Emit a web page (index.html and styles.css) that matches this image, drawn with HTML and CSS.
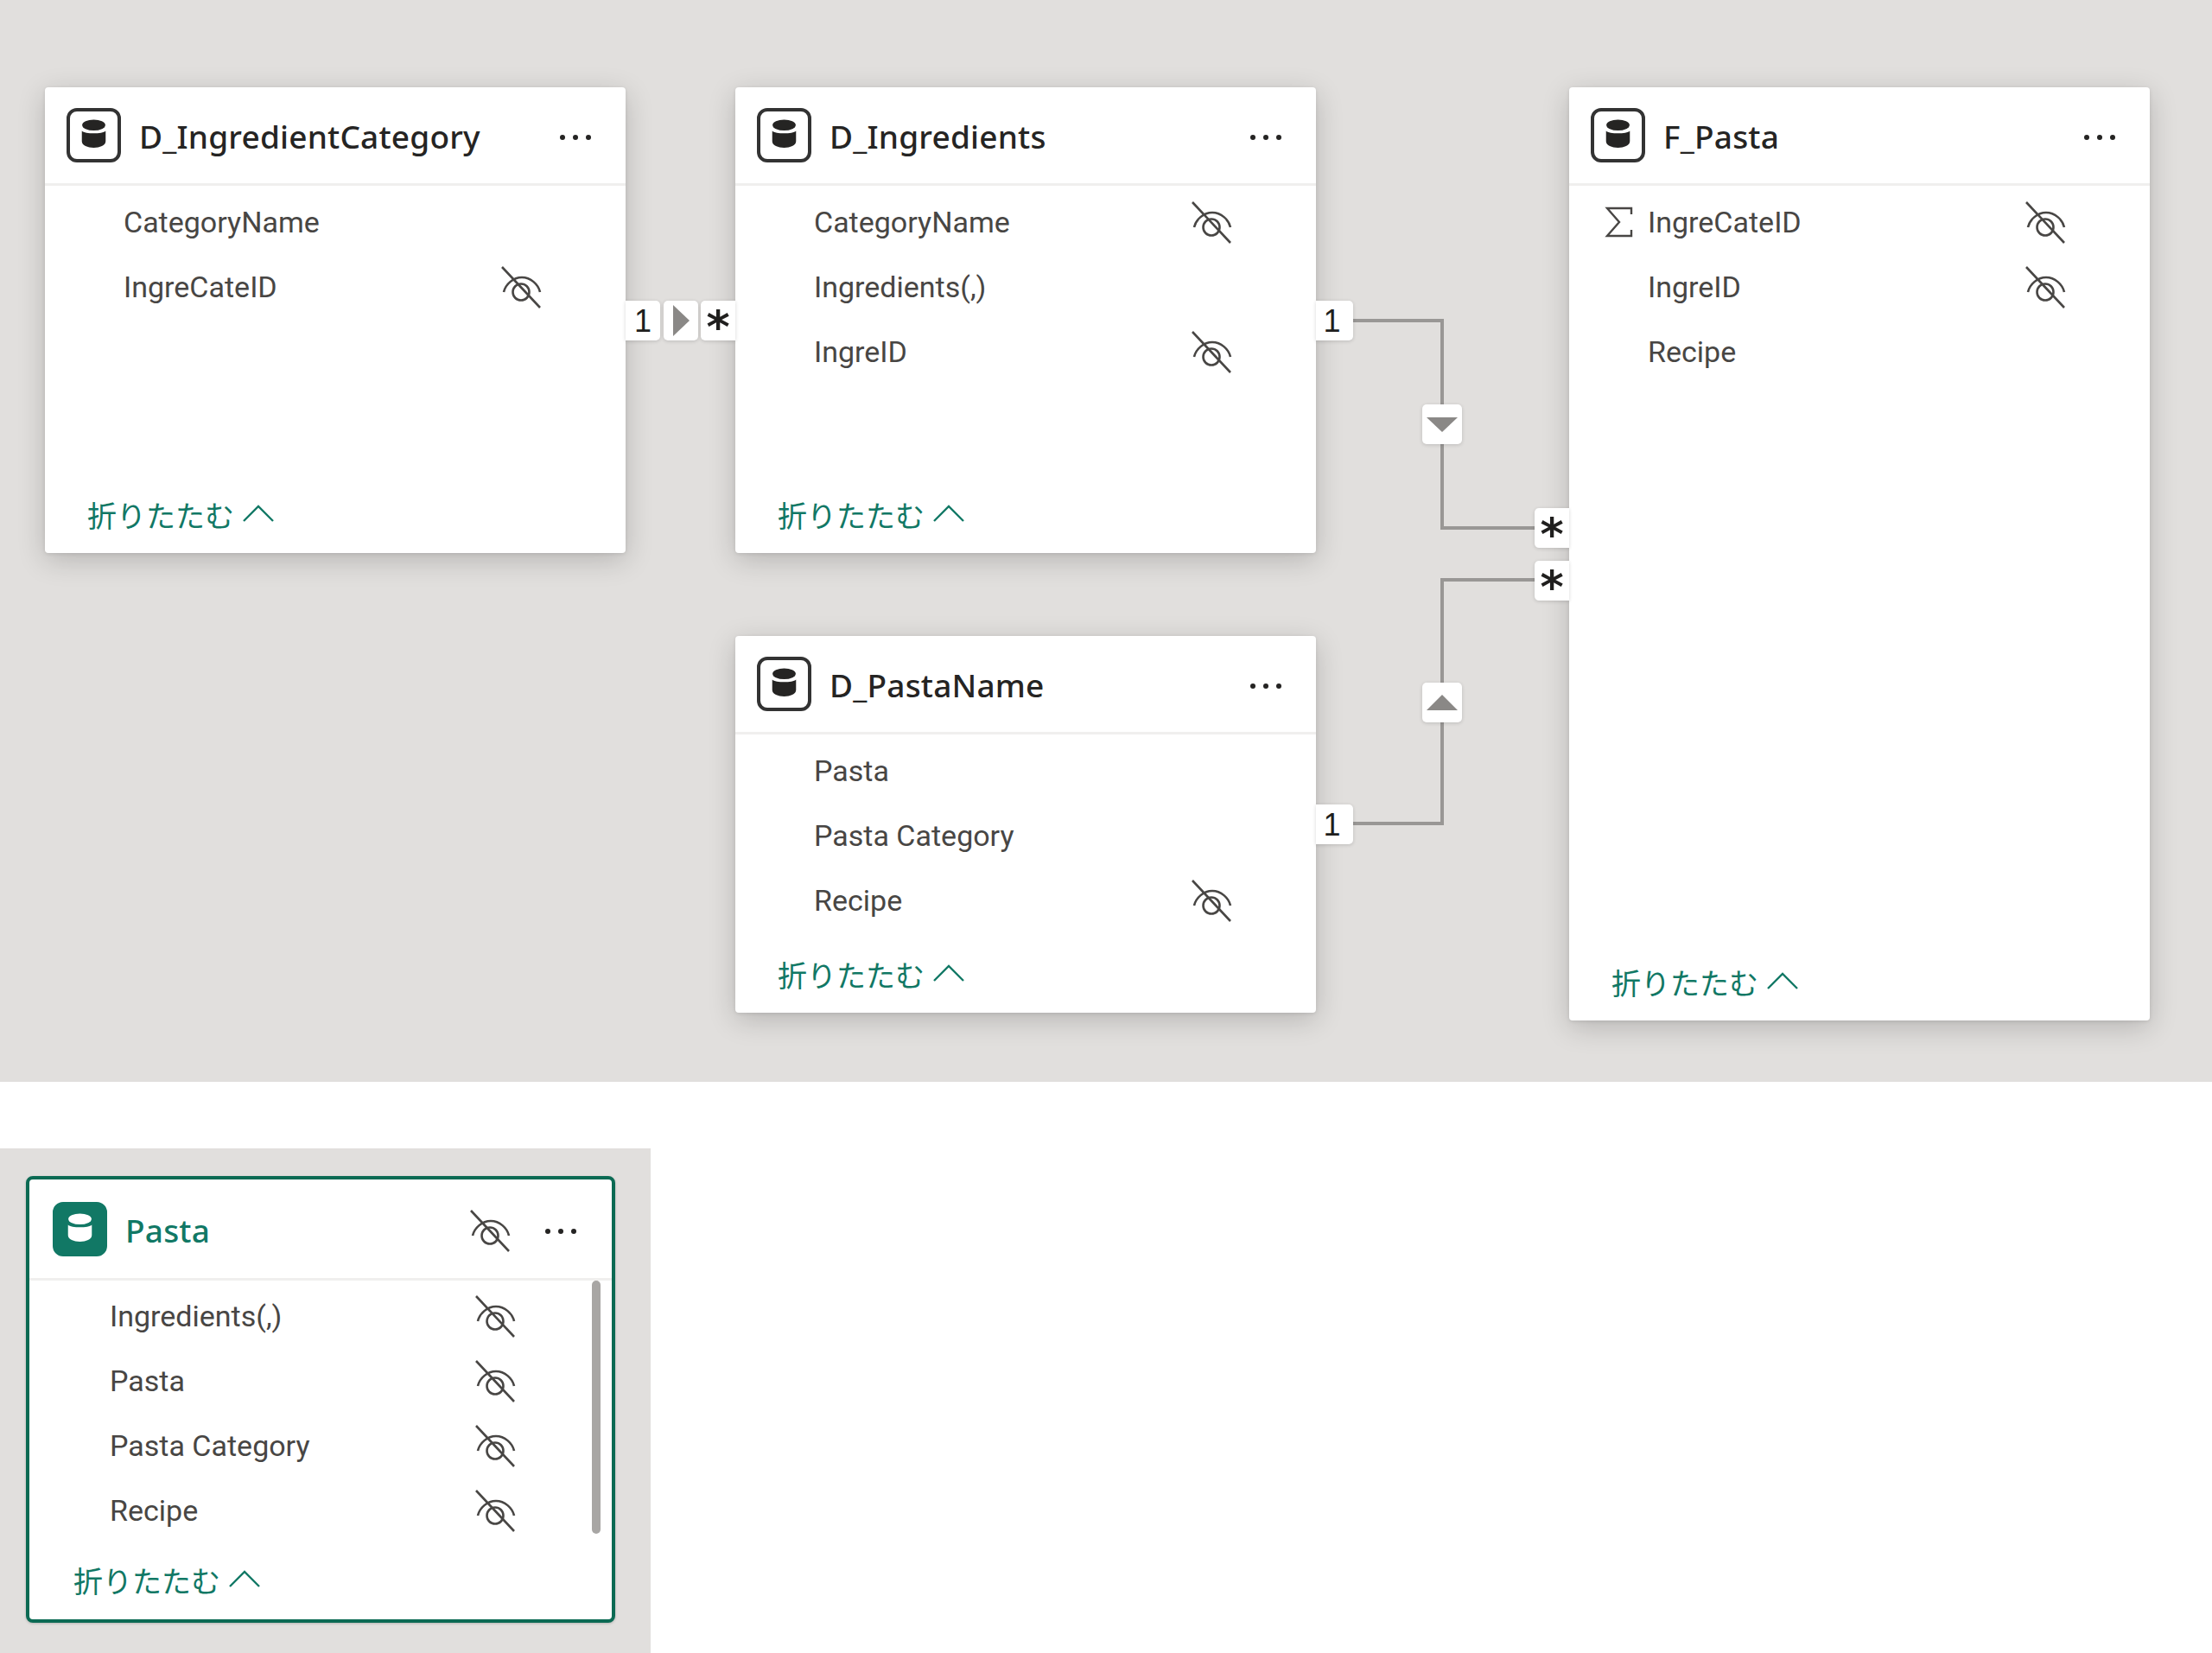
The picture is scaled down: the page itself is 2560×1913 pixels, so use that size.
FILE: index.html
```html
<!DOCTYPE html>
<html lang="ja">
<head>
<meta charset="utf-8">
<title>Model view</title>
<link rel="stylesheet" href="styles.css">
</head>
<body>
<svg class="defs" aria-hidden="true">
  <symbol id="eye" viewBox="0 0 48 50">
    <path d="M2 2 L46 49" />
    <path d="M4 31 C6 22 15 14 25 14 C35 14 44 22 46 31" />
    <circle cx="24" cy="31" r="9.5" />
  </symbol>
  <symbol id="db" viewBox="0 0 30 30">
    <ellipse cx="15" cy="9" rx="6.8" ry="3.2" />
    <path d="M8 12.4 C10 14.4 20 14.4 22 12.4 L22 18.6 C22 23.6 8 23.6 8 18.6 Z" />
  </symbol>
</svg>

<main class="canvas">
  <svg class="lines" width="2560" height="1252" aria-hidden="true">
    <path d="M1566 371 H1669 V611 H1776" />
    <path d="M1566 953 H1669 V671 H1776" />
  </svg>

  <section class="card node-cat">
    <header class="card-head">
      <span class="db-box"><svg class="db-svg"><use href="#db"/></svg></span>
      <h2 class="title">D_IngredientCategory</h2>
      <span class="dots"><i></i><i></i><i></i></span>
    </header>
    <div class="rows">
      <div class="row"><span class="name">CategoryName</span></div>
      <div class="row"><span class="name">IngreCateID</span><svg class="eye"><use href="#eye"/></svg></div>
    </div>
    <footer class="foot"><span>折りたたむ</span><svg class="chev" viewBox="0 0 38 22"><path d="M2 20 L19 3 L36 20"/></svg></footer>
  </section>

  <section class="card node-ing">
    <header class="card-head">
      <span class="db-box"><svg class="db-svg"><use href="#db"/></svg></span>
      <h2 class="title">D_Ingredients</h2>
      <span class="dots"><i></i><i></i><i></i></span>
    </header>
    <div class="rows">
      <div class="row"><span class="name">CategoryName</span><svg class="eye"><use href="#eye"/></svg></div>
      <div class="row"><span class="name">Ingredients(,)</span></div>
      <div class="row"><span class="name">IngreID</span><svg class="eye"><use href="#eye"/></svg></div>
    </div>
    <footer class="foot"><span>折りたたむ</span><svg class="chev" viewBox="0 0 38 22"><path d="M2 20 L19 3 L36 20"/></svg></footer>
  </section>

  <section class="card node-name">
    <header class="card-head">
      <span class="db-box"><svg class="db-svg"><use href="#db"/></svg></span>
      <h2 class="title">D_PastaName</h2>
      <span class="dots"><i></i><i></i><i></i></span>
    </header>
    <div class="rows">
      <div class="row"><span class="name">Pasta</span></div>
      <div class="row"><span class="name">Pasta Category</span></div>
      <div class="row"><span class="name">Recipe</span><svg class="eye"><use href="#eye"/></svg></div>
    </div>
    <footer class="foot"><span>折りたたむ</span><svg class="chev" viewBox="0 0 38 22"><path d="M2 20 L19 3 L36 20"/></svg></footer>
  </section>

  <section class="card node-fact">
    <header class="card-head">
      <span class="db-box"><svg class="db-svg"><use href="#db"/></svg></span>
      <h2 class="title">F_Pasta</h2>
      <span class="dots"><i></i><i></i><i></i></span>
    </header>
    <div class="rows">
      <div class="row"><svg class="sigma" viewBox="0 0 34 36"><path d="M31 9 V2 H3 L17 18 L3 34 H31 V27"/></svg><span class="name">IngreCateID</span><svg class="eye"><use href="#eye"/></svg></div>
      <div class="row"><span class="name">IngreID</span><svg class="eye"><use href="#eye"/></svg></div>
      <div class="row"><span class="name">Recipe</span></div>
    </div>
    <footer class="foot"><span>折りたたむ</span><svg class="chev" viewBox="0 0 38 22"><path d="M2 20 L19 3 L36 20"/></svg></footer>
  </section>

  <div class="badge flush-l b-cat-1">1</div>
  <div class="badge b-cat-dir"><svg class="tri" width="19" height="36" viewBox="0 0 19 36"><path d="M0 0 L19 18 L0 36 Z"/></svg></div>
  <div class="badge flush-r star b-cat-n"><span class="star-glyph">*</span></div>

  <div class="badge flush-l b-ing-1">1</div>
  <div class="badge b-ing-dir"><svg class="tri" width="36" height="17" viewBox="0 0 36 17"><path d="M0 0 H36 L18 17 Z"/></svg></div>
  <div class="badge flush-r star b-fact-a"><span class="star-glyph">*</span></div>

  <div class="badge flush-r star b-fact-b"><span class="star-glyph">*</span></div>
  <div class="badge b-name-dir"><svg class="tri" width="36" height="18" viewBox="0 0 36 18"><path d="M18 0 L36 18 H0 Z"/></svg></div>
  <div class="badge flush-l b-name-1">1</div>
</main>

<aside class="panel">
  <section class="card selected">
    <header class="card-head">
      <span class="db-box solid"><svg class="db-svg"><use href="#db"/></svg></span>
      <h2 class="title">Pasta</h2>
      <svg class="eye head-eye"><use href="#eye"/></svg>
      <span class="dots"><i></i><i></i><i></i></span>
    </header>
    <div class="rows">
      <div class="row"><span class="name">Ingredients(,)</span><svg class="eye"><use href="#eye"/></svg></div>
      <div class="row"><span class="name">Pasta</span><svg class="eye"><use href="#eye"/></svg></div>
      <div class="row"><span class="name">Pasta Category</span><svg class="eye"><use href="#eye"/></svg></div>
      <div class="row"><span class="name">Recipe</span><svg class="eye"><use href="#eye"/></svg></div>
      <div class="scrollbar"></div>
    </div>
    <footer class="foot"><span>折りたたむ</span><svg class="chev" viewBox="0 0 38 22"><path d="M2 20 L19 3 L36 20"/></svg></footer>
  </section>
</aside>
</body>
</html>
```
FILE: styles.css
```css
* { box-sizing: border-box; }
html, body { margin: 0; padding: 0; background: #fff; }
body {
  height: 1913px;
  overflow: hidden;
  font-family: Roboto, "Noto Sans CJK JP", sans-serif;
  color: #252423;
}
.defs { display: none; }

.canvas {
  position: relative;
  height: 1252px;
  background: #e1dfdd;
  overflow: hidden;
}
.lines { position: absolute; left: 0; top: 0; }
.lines path { fill: none; stroke: #999795; stroke-width: 4; }

.card {
  display: flex;
  flex-direction: column;
  width: 672px;
  background: #fff;
  border-radius: 4px;
  box-shadow: 0 8px 32px rgba(0, 0, 0, .19), 0 1px 4px rgba(0, 0, 0, .1);
}
.node-cat, .node-ing, .node-name, .node-fact { position: absolute; }
.node-cat { left: 52px; top: 101px; height: 539px; }
.node-ing { left: 851px; top: 101px; height: 539px; }
.node-name { left: 851px; top: 736px; height: 436px; }
.node-fact { left: 1816px; top: 101px; height: 1080px; }

.card-head {
  display: flex;
  align-items: center;
  flex: none;
  height: 114px;
  padding: 0 40px 0 25px;
  border-bottom: 3px solid #f0efee;
}
.db-box {
  display: flex;
  align-items: center;
  justify-content: center;
  flex: none;
  width: 63px;
  height: 63px;
  border: 4px solid #333;
  border-radius: 12px;
}
.db-svg { width: 59px; height: 59px; fill: #252423; margin: -2px; }
.title {
  flex: 1;
  margin: 3px 0 0 21px;
  font-family: "Noto Sans", Roboto, sans-serif;
  font-size: 37px;
  font-weight: 500;
  line-height: 50px;
  letter-spacing: .2px;
  color: #252423;
}
.dots { display: flex; gap: 9px; flex: none; margin-top: 5px; }
.dots i { width: 6px; height: 6px; border-radius: 50%; background: #252423; }

.rows {
  position: relative;
  flex: 1;
  padding: 4px 96px 0 91px;
}
.row {
  position: relative;
  display: flex;
  align-items: center;
  justify-content: space-between;
  height: 75px;
}
.name {
  font-size: 34px;
  font-weight: 400;
  line-height: 46px;
  color: #484644;
}
.eye {
  flex: none;
  width: 50px;
  height: 50px;
  fill: none;
  stroke: #484644;
  stroke-width: 2.6;
}
.sigma {
  position: absolute;
  left: -50px;
  top: 20px;
  width: 34px;
  height: 36px;
  fill: none;
  stroke: #484644;
  stroke-width: 2.4;
}

.foot {
  display: flex;
  align-items: center;
  gap: 9px;
  flex: none;
  height: 90px;
  padding-left: 49px;
  font-size: 34px;
  color: #117865;
}
.chev {
  width: 38px;
  height: 22px;
  fill: none;
  stroke: #117865;
  stroke-width: 2.4;
  margin-top: -2px;
}

.badge {
  position: absolute;
  display: flex;
  align-items: center;
  justify-content: center;
  height: 46px;
  width: 42px;
  background: #fff;
  border-radius: 5px;
  box-shadow: 0 1px 4px rgba(0, 0, 0, .16);
  font-family: "Liberation Sans", Arial, sans-serif;
  font-size: 36px;
  color: #201f1e;
}
.flush-l { border-radius: 0 5px 5px 0; width: 43px; padding: 2px 6px 0 0; }
.flush-r { border-radius: 5px 0 0 5px; width: 40px; }
.star-glyph {
  position: relative;
  top: 7px;
  font-family: "DejaVu Sans", sans-serif;
  font-size: 52px;
  font-weight: 700;
  line-height: 46px;
}
.tri { fill: #8a8886; }
.b-cat-1 { left: 724px; top: 348px; width: 40px; padding-right: 0; }
.b-cat-dir { left: 768px; top: 348px; width: 40px; }
.b-cat-n { left: 811px; top: 348px; }
.b-ing-1 { left: 1523px; top: 348px; }
.b-ing-dir { left: 1646px; top: 468px; width: 46px; }
.b-fact-a { left: 1776px; top: 588px; }
.b-fact-b { left: 1776px; top: 649px; }
.b-name-dir { left: 1646px; top: 790px; width: 46px; }
.b-name-1 { left: 1523px; top: 931px; }

.panel {
  width: 753px;
  height: 584px;
  margin-top: 77px;
  padding: 32px 0 0 30px;
  background: #e1dfdd;
}
.selected {
  width: 682px;
  height: 517px;
  border: 4px solid #0b6a53;
  border-radius: 8px;
  box-shadow: 0 1px 3px rgba(0, 0, 0, .2);
}
.selected .card-head {
  height: 117px;
  padding: 0 41px 0 27px;
}
.selected .title { margin-left: 21px; color: #117865; }
.solid { background: #117865; border-color: #117865; }
.solid .db-svg { fill: #fff; }
.head-eye { margin-right: 39px; margin-top: 4px; }
.selected .rows { padding: 3px 110px 0 93px; }
.selected .foot { height: 89px; padding: 0 0 3px 51px; }
.scrollbar {
  position: absolute;
  right: 13px;
  top: 0;
  width: 10px;
  height: 293px;
  border-radius: 5px;
  background: #a8a6a4;
}
```
